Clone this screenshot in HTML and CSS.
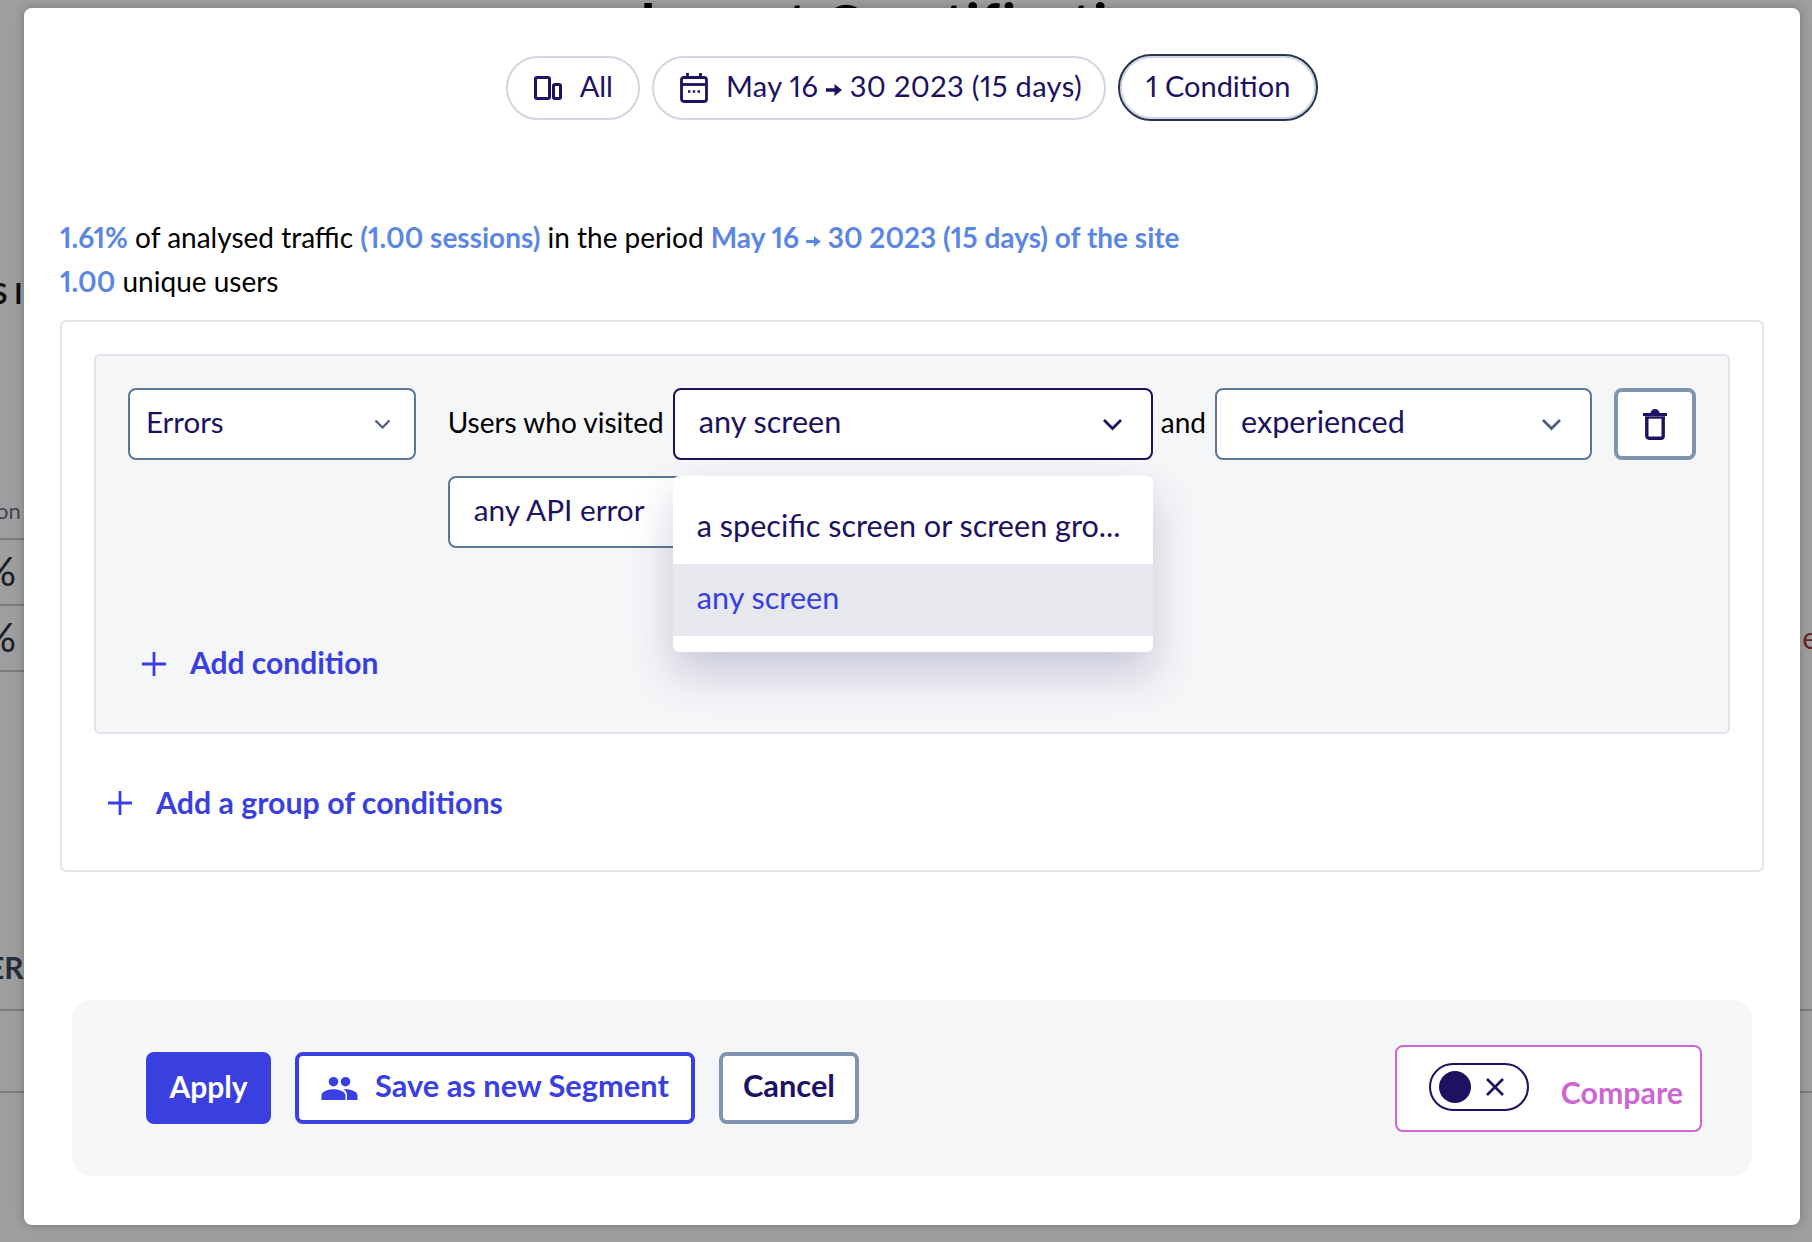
FILE: index.html
```html
<!DOCTYPE html>
<html lang="en">
<head>
<meta charset="utf-8">
<title>Segment conditions</title>
<link rel="stylesheet" href="styles.css">
</head>
<body>
<div class="page">
  <h1 class="page-title">Impact @ notification</h1>
  <div class="page-rows">
    <div class="page-row row-s"><span class="bg-strong">S I</span></div>
    <div class="page-row row-on"><span class="bg-small">on</span></div>
    <div class="page-row row-pct line-left"><span class="bg-pct">%</span></div>
    <div class="page-row row-pct line-left"><span class="bg-pct">%</span><span class="bg-red">e</span></div>
    <div class="page-row row-er line-left"><span class="bg-er">ER</span></div>
    <div class="page-row row-end line"></div>
    <div class="page-row row-end line"></div>
  </div>
</div>
<div class="overlay"></div>
<main class="modal">
  <div class="pills">
    <div class="pill pill-all">
      <svg class="ico" viewBox="0 0 28 24" width="28" height="24"><rect x="1.500" y="1.500" width="14" height="21" rx="1.500" fill="none" stroke="currentColor" stroke-width="3"/><rect x="19.500" y="8.500" width="7" height="14" rx="1.500" fill="none" stroke="currentColor" stroke-width="3"/></svg>
      <span>All</span>
    </div>
    <div class="pill pill-date">
      <svg class="ico" viewBox="0 0 28 30" width="28" height="30"><rect x="1.500" y="4.500" width="25" height="24" rx="2.500" fill="none" stroke="currentColor" stroke-width="2.800"/><path d="M1 11.500h26" stroke="currentColor" stroke-width="2.800"/><path d="M7.500 0v6M20.500 0v6" stroke="currentColor" stroke-width="2.800"/><path d="M8 18.500h2.400M12.800 18.500h2.400M17.600 18.500h2.400" stroke="currentColor" stroke-width="2.400"/></svg>
      <span class="range">May 16 <svg class="arr" viewBox="0 0 16 12" width="16" height="12"><path fill="currentColor" d="M0 4.300h8.500V0L16 6l-7.500 6V7.700H0z"/></svg> 30 2023 (15 days)</span>
    </div>
    <div class="pill pill-active"><span>1 Condition</span></div>
  </div>

  <p class="summary summary-a"><b>1.61%</b> of analysed traffic <b>(1.00 sessions)</b> in the period <b>May 16 <svg class="arr" viewBox="0 0 16 12" width="15" height="11"><path fill="currentColor" d="M0 4.300h8.500V0L16 6l-7.500 6V7.700H0z"/></svg> 30 2023 (15 days) of the site</b></p>
  <p class="summary summary-b"><b>1.00</b> unique users</p>

  <section class="outer">
    <div class="group">
      <div class="cond">
        <div class="select sel-type"><span>Errors</span><svg class="chev" viewBox="0 0 17 10" width="17" height="10"><path d="M1.500 1.500 8.500 8.500l7-7" fill="none" stroke="currentColor" stroke-width="2.200"/></svg></div>
        <div class="cond-fields">
          <div class="cond-line">
            <span class="word">Users who visited</span>
            <div class="select sel-open"><span>any screen</span><svg class="chev" viewBox="0 0 21 13" width="21" height="13"><path d="M2 2l8.500 8.500L19 2" fill="none" stroke="currentColor" stroke-width="2.800"/></svg>
              <ul class="menu">
                <li><span>a specific screen or screen gro...</span></li>
                <li class="on"><span>any screen</span></li>
              </ul>
            </div>
            <span class="word">and</span>
            <div class="select sel-exp"><span>experienced</span><svg class="chev" viewBox="0 0 21 13" width="21" height="13"><path d="M2 2l8.500 8.500L19 2" fill="none" stroke="currentColor" stroke-width="2.800"/></svg></div>
            <button class="trash" type="button"><svg viewBox="0 0 24 31" width="24" height="31"><path d="M0 5.500h24" stroke="#1c1261" stroke-width="3"/><path d="M7.500 4.500C7.500 1.500 9.500 0 12 0s4.500 1.500 4.500 4.500z" fill="#1c1261"/><path d="M3.800 8.500v18.500a2.200 2.200 0 0 0 2.200 2.200h12a2.200 2.200 0 0 0 2.200-2.200V8.500" fill="none" stroke="#1c1261" stroke-width="3.400"/><path d="M2 8.500h20" stroke="#1c1261" stroke-width="2.400"/></svg></button>
          </div>
          <div class="select sel-api"><span>any API error</span></div>
        </div>
      </div>
      <div class="add add-cond"><svg viewBox="0 0 24 24" width="24" height="24"><path d="M12 0v24M0 12h24" stroke="currentColor" stroke-width="2.800"/></svg><span>Add condition</span></div>
    </div>
    <div class="add add-group"><svg viewBox="0 0 24 24" width="24" height="24"><path d="M12 0v24M0 12h24" stroke="currentColor" stroke-width="2.800"/></svg><span class="add-long">Add a group of conditions</span></div>
  </section>

  <footer class="foot">
    <div class="actions">
      <button class="btn btn-apply" type="button"><span>Apply</span></button>
      <button class="btn btn-save" type="button"><svg viewBox="0 0 24 16" width="37" height="24"><path fill="currentColor" d="M16 7a3.200 3.200 0 1 0 0-6.400A3.200 3.200 0 0 0 16 7zM8 7a3.200 3.200 0 1 0 0-6.400A3.200 3.200 0 0 0 8 7zm0 1.800c-2.700 0-8 1.300-8 4V16h16v-3.200c0-2.700-5.300-4-8-4zm8 0c-.4 0-.8 0-1.300.1 1.400.9 2.300 2.200 2.300 3.900V16h7v-3.200c0-2.700-5.300-4-8-4z"/></svg><span>Save as new Segment</span></button>
      <button class="btn btn-cancel" type="button"><span>Cancel</span></button>
    </div>
    <div class="compare">
      <div class="toggle"><i class="knob"></i><svg viewBox="0 0 18 18" width="18" height="18"><path d="M1 1l16 16M17 1 1 17" stroke="#1c1261" stroke-width="2.600"/></svg></div>
      <span class="cmp-label">Compare</span>
    </div>
  </footer>
</main>
</body>
</html>
```

FILE: styles.css
```css
* { box-sizing: border-box; }
html, body { margin: 0; height: 100%; }
body {
  width: 1812px;
  height: 1242px;
  overflow: hidden;
  position: relative;
  font-family: "Lato", "Liberation Sans", sans-serif;
  font-variant-numeric: proportional-nums;
  background: #fff;
  color: #1c1261;
}

/* page behind the overlay */
.page { height: 1242px; overflow: hidden; }
.page-title {
  margin: 0;
  height: 17px;
  text-align: center;
  font-size: 50px;
  line-height: 40px;
  font-weight: 900;
  color: #000;
  letter-spacing: 2.5px;
}
.page-rows { display: flex; flex-direction: column; }
.page-row { display: flex; justify-content: space-between; align-items: center; }
.line { border-top: 2px solid #c6c9d4; }
.line-left { background: linear-gradient(#c6c9d4, #c6c9d4) top left / 100px 2px no-repeat; }
.row-s { height: 50px; margin-top: 251px; font-size: 28px; font-weight: 700; color: #1a1a22; }
.row-on { height: 220px; align-items: flex-end; padding-bottom: 14px; font-size: 22px; color: #6a6f7f; }
.row-pct { height: 66px; font-size: 40px; color: #2a3040; }
.row-er { height: 339px; align-items: flex-end; padding-bottom: 24px; font-size: 30px; font-weight: 700; color: #3b4763; }
.row-end { height: 82px; }
.bg-strong { margin-left: -8px; }
.bg-small { margin-left: -4px; }
.bg-pct { margin-left: -16px; }
.bg-er { margin-left: -13px; }
.bg-red { color: #b03a3a; font-size: 30px; margin-right: -6px; }

.overlay {
  position: absolute;
  inset: 0;
  background: rgba(0, 0, 0, 0.38);
}

/* modal */
.modal {
  position: absolute;
  left: 24px;
  top: 8px;
  width: 1776px;
  height: 1217px;
  background: #fff;
  border-radius: 8px;
  box-shadow: 0 0 10px rgba(0, 0, 0, .25);
  padding: 46px 36px 0;
  display: flex;
  flex-direction: column;
}

.pills { display: flex; justify-content: center; align-items: center; gap: 12px; height: 67px; }
.pill {
  height: 64px;
  border: 2px solid #d2d6e3;
  border-radius: 32px;
  display: flex;
  align-items: center;
  font-size: 29px;
  color: #1c1261;
  white-space: nowrap;
}
.pill > span { padding-bottom: 4px; }
.pill-all { padding: 0 25px 0 26px; gap: 18px; }
.pill-date { padding: 0 22px 0 26px; gap: 18px; }
.range { letter-spacing: .35px; }
.pill-active {
  height: 67px;
  border-radius: 34px;
  box-shadow: inset 0 0 0 2px #d2d6e3;
  padding: 0 26px;
  border-color: #27344f;
}
.ico { flex: none; }
.arr { vertical-align: 1px; }

.summary { margin: 0; font-size: 28px; color: #000; line-height: 44px; }
.summary b { color: #5b87e2; font-weight: 700; }
.summary-a { margin-top: 94px; }

.outer, .foot { flex: none; }
.outer {
  margin-top: 17px;
  height: 552px;
  border: 2px solid #e0e2e8;
  border-radius: 6px;
  padding: 32px;
}

.group {
  height: 380px;
  background: #f5f6f8;
  border: 2px solid #e0e2e8;
  border-radius: 6px;
  padding: 32px 32px 0;
}
.cond { display: flex; gap: 32px; align-items: flex-start; }
.cond-fields { display: flex; flex-direction: column; gap: 16px; }
.cond-line { display: flex; align-items: flex-start; gap: 8px; }
.word { font-size: 28px; line-height: 69px; color: #000; white-space: nowrap; }
.word:first-child { margin-right: 1px; }

.select {
  height: 72px;
  background: #fff;
  border: 2px solid #5f7594;
  border-radius: 8px;
  display: flex;
  align-items: center;
  justify-content: space-between;
  font-size: 30.6px;
  color: #1c1261;
  position: relative;
}
.select > span { padding-bottom: 6px; }
.sel-type { width: 288px; padding: 0 23px 0 16px; font-size: 29.5px; }
.sel-open { width: 480px; padding: 0 28px 0 24px; border-color: #1c1261; }
.sel-exp { width: 377px; padding: 0 28px 0 24px; margin-left: 1px; }
.sel-type .chev, .sel-exp .chev { color: #4b5c7d; }
.sel-open .chev { color: #1c1261; }
.sel-api { width: 260px; padding: 0 24px; font-size: 29.8px; }

.trash {
  width: 82px;
  height: 72px;
  margin-left: 14px;
  background: #fff;
  border: 4px solid #8094b0;
  border-radius: 8px;
  padding: 0;
  display: flex;
  align-items: center;
  justify-content: center;
}

.menu {
  position: absolute;
  left: -2px;
  top: 86px;
  width: 480px;
  height: 176px;
  margin: 0;
  padding: 16px 0;
  list-style: none;
  background: #fff;
  border-radius: 6px;
  box-shadow: 0 22px 44px rgba(40, 40, 110, .22);
  z-index: 3;
}
.menu li { height: 72px; padding: 0 24px; display: flex; align-items: center; font-size: 30.6px; white-space: nowrap; }
.menu li span { padding-bottom: 5px; }
.menu li.on { background: #e6e8ee; color: #3a3fdf; }

.add { display: flex; align-items: center; gap: 24px; color: #3a3fdf; font-size: 30px; font-weight: 700; }
.add span { padding-bottom: 4px; }
.add .add-long { font-size: 30.3px; padding-bottom: 2px; }
.add-cond { margin: 96px 0 0 14px; }
.add-group { margin: 50px 0 0 14px; }

.foot {
  width: 1680px;
  height: 176px;
  margin: 128px 0 0 12px;
  background: #f5f6f8;
  border-radius: 20px;
  padding: 0 50px 0 74px;
  display: flex;
  align-items: center;
  justify-content: space-between;
}
.actions { display: flex; gap: 24px; }
.btn {
  height: 72px;
  border-radius: 8px;
  font-family: inherit;
  font-size: 30.8px;
  font-weight: 700;
  display: flex;
  align-items: center;
  justify-content: center;
  padding: 0;
  background: #fff;
}
.btn span { padding-bottom: 5px; }
.btn-apply { width: 125px; background: #3a3fdf; border: 0; color: #fff; font-size: 30px; }
.btn-save { width: 400px; border: 4px solid #3a3fdf; color: #3a3fdf; gap: 17px; }
.btn-cancel { width: 140px; border: 4px solid #8094b0; color: #1c1261; }

.compare {
  width: 307px;
  height: 87px;
  background: #fff;
  border: 2px solid #cc66d0;
  border-radius: 8px;
  padding: 0 17px 0 32px;
  display: flex;
  align-items: center;
  justify-content: space-between;
}
.toggle {
  width: 100px;
  height: 48px;
  margin-top: -2px;
  border: 2px solid #1c1261;
  border-radius: 24px;
  padding: 0 23px 0 8px;
  display: flex;
  align-items: center;
  justify-content: space-between;
}
.knob { width: 32px; height: 32px; border-radius: 50%; background: #1c1261; }
.cmp-label { font-size: 30.3px; font-weight: 700; color: #cc66d0; margin-top: 8px; }
```
